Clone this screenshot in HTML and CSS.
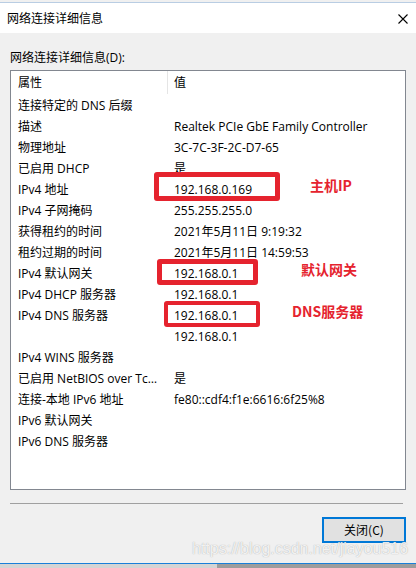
FILE: index.html
```html
<!DOCTYPE html>
<html lang="zh-CN">
<head>
<meta charset="utf-8">
<title>网络连接详细信息</title>
<link rel="stylesheet" href="styles.css">
</head>
<body>
<div class="window">
  <div class="titlebar">
    <span class="title">网络连接详细信息</span>
    <svg class="close-x" width="10" height="10" viewBox="0 0 10 10"><path d="M0.5 0.5 L9.5 9.5 M9.5 0.5 L0.5 9.5" stroke="#000" stroke-width="1.1" fill="none"/></svg>
  </div>

  <div class="content">
    <div class="caption">网络连接详细信息(D):</div>
    <div class="listbox">
      <div class="list-head">
        <div class="col-name">属性</div>
        <div class="col-value head-value">值</div>
      </div>
      <div class="row"><div class="col-name">连接特定的 DNS 后缀</div><div class="col-value"></div></div>
      <div class="row"><div class="col-name">描述</div><div class="col-value">Realtek PCIe GbE Family Controller</div></div>
      <div class="row"><div class="col-name">物理地址</div><div class="col-value">3C-7C-3F-2C-D7-65</div></div>
      <div class="row"><div class="col-name">已启用 DHCP</div><div class="col-value">是</div></div>
      <div class="row"><div class="col-name">IPv4 地址</div><div class="col-value">192.168.0.169</div></div>
      <div class="row"><div class="col-name">IPv4 子网掩码</div><div class="col-value">255.255.255.0</div></div>
      <div class="row"><div class="col-name">获得租约的时间</div><div class="col-value">2021年5月11日 9:19:32</div></div>
      <div class="row"><div class="col-name">租约过期的时间</div><div class="col-value">2021年5月11日 14:59:53</div></div>
      <div class="row"><div class="col-name">IPv4 默认网关</div><div class="col-value">192.168.0.1</div></div>
      <div class="row"><div class="col-name">IPv4 DHCP 服务器</div><div class="col-value">192.168.0.1</div></div>
      <div class="row"><div class="col-name">IPv4 DNS 服务器</div><div class="col-value">192.168.0.1</div></div>
      <div class="row"><div class="col-name"></div><div class="col-value">192.168.0.1</div></div>
      <div class="row"><div class="col-name">IPv4 WINS 服务器</div><div class="col-value"></div></div>
      <div class="row"><div class="col-name">已启用 NetBIOS over Tcpip</div><div class="col-value">是</div></div>
      <div class="row"><div class="col-name">连接-本地 IPv6 地址</div><div class="col-value">fe80::cdf4:f1e:6616:6f25%8</div></div>
      <div class="row"><div class="col-name">IPv6 默认网关</div><div class="col-value"></div></div>
      <div class="row"><div class="col-name">IPv6 DNS 服务器</div><div class="col-value"></div></div>
    </div>
  </div>

  <div class="divider"></div>

  <div class="footer">
    <button class="btn-close">关闭(C)</button>
  </div>

  <div class="bottom-edge"><span class="edge-left"></span><span class="edge-right"></span></div>

  <!-- hand-drawn markup over the list -->
  <div class="mark mark-ip"></div>
  <div class="mark mark-gw"></div>
  <div class="mark mark-dns"></div>
  <div class="note note-ip">主机IP</div>
  <div class="note note-gw">默认网关</div>
  <div class="note note-dns">DNS服务器</div>

  <div class="watermark">https://blog.csdn.net/jiayou516</div>
</div>
</body>
</html>
```

FILE: styles.css
```css
html, body {
  margin: 0;
  padding: 0;
}

body {
  font-family: "Open Sans", "Noto Sans CJK SC", sans-serif;
  font-size: 12px;
  color: #000;
}

.window {
  position: relative;
  width: 416px;
  height: 568px;
  background: #f0f0f0;
  display: flex;
  flex-direction: column;
  overflow: hidden;
}

/* title bar */
.titlebar {
  height: 31px;
  flex: none;
  background: #fff;
  border-top: 1px solid #b9cde3;
  box-sizing: border-box;
  margin-top: 2px;
  display: flex;
  align-items: center;
  justify-content: space-between;
  padding: 0 8px 0 7px;
}

.title {
  font-family: "Noto Sans CJK SC", sans-serif;
  font-size: 12px;
  line-height: 16px;
}

.close-x {
  display: block;
  margin-top: 1px;
}

/* content */
.content {
  padding: 0 10px;
  flex: none;
}

.caption {
  font-family: "Open Sans", "Noto Sans CJK SC", sans-serif;
  height: 37px;
  line-height: 16px;
  padding-top: 17px;
  box-sizing: border-box;
}

.listbox {
  background: #fff;
  border: 1px solid #828790;
  height: 420px;
  box-sizing: border-box;
}

.list-head,
.row {
  display: grid;
  grid-template-columns: 156px 1fr;
}

.list-head {
  height: 24px;
  line-height: 24px;
}

.row {
  height: 21px;
  line-height: 21px;
}

.col-name {
  padding-left: 7px;
  padding-right: 4px;
  white-space: nowrap;
  overflow: hidden;
  text-overflow: ellipsis;
}

.col-value {
  padding-left: 7px;
  white-space: nowrap;
  overflow: hidden;
}

.head-value {
  border-left: 1px solid #e5e5e5;
  padding-left: 6px;
  height: 23px;
}

/* etched divider above the buttons */
.divider {
  height: 1px;
  background: #a0a0a0;
  margin: 13px 13px 0 10px;
  flex: none;
}

.footer {
  display: flex;
  justify-content: flex-end;
  padding: 13px 10px 0 0;
  flex: none;
}

.btn-close {
  width: 84px;
  height: 26px;
  background: #e1e1e1;
  border: 2px solid #0078d7;
  font-family: "Noto Sans CJK SC", sans-serif;
  font-size: 12px;
  color: #000;
  padding: 0;
  line-height: 20px;
}

.bottom-edge {
  margin-top: auto;
  height: 4px;
  border-top: 1px solid #1a7fd8;
  display: flex;
  flex: none;
}

.edge-left {
  width: 217px;
  background: #d4d4d4;
}

.edge-right {
  flex: 1;
  background: #9d9d9d;
}

/* annotation boxes */
.mark {
  position: absolute;
  border: 5px solid #e5232e;
  border-radius: 3px;
  box-sizing: border-box;
}

.mark-ip {
  left: 154px;
  top: 172px;
  width: 126px;
  height: 29px;
}

.mark-gw {
  left: 157px;
  top: 259px;
  width: 101px;
  height: 26px;
}

.mark-dns {
  left: 164px;
  top: 301px;
  width: 96px;
  height: 26px;
  border-width: 4px;
}

.note {
  position: absolute;
  color: #e5232e;
  font-family: "Noto Sans CJK SC", sans-serif;
  font-weight: bold;
  font-size: 14px;
  line-height: 18px;
}

.note-ip {
  left: 310px;
  top: 176px;
}

.note-gw {
  left: 301px;
  top: 260px;
}

.note-dns {
  left: 292px;
  top: 302px;
}

.watermark {
  position: absolute;
  left: 192px;
  top: 539px;
  font-family: "Liberation Sans", Arial, sans-serif;
  font-size: 16px;
  line-height: 20px;
  color: rgba(255, 255, 255, 0.85);
  text-shadow: 0 0 1px rgba(125, 125, 125, 0.7);
  white-space: nowrap;
}
```
